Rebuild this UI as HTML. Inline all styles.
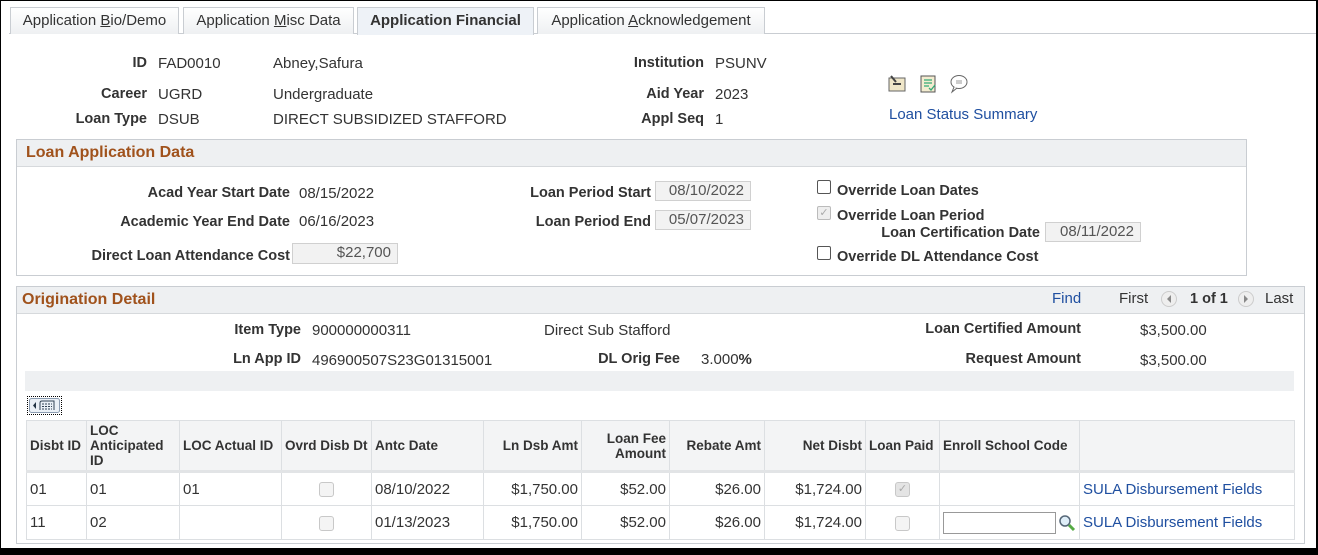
<!DOCTYPE html>
<html><head><meta charset="utf-8"><style>
*{margin:0;padding:0;box-sizing:border-box}
body{width:1318px;height:555px;background:#000;font-family:"Liberation Sans",Arial,sans-serif;font-size:15px;color:#333;position:relative;overflow:hidden}
#pg{position:absolute;left:1px;top:1px;width:1315px;height:547px;background:#fff}
.a{position:absolute;white-space:nowrap;line-height:16px}
.b{font-weight:bold;font-size:14.5px}
.r{text-align:right}
.tab{position:absolute;top:6px;height:27px;border:1px solid #c9cdd2;border-bottom:none;background:linear-gradient(#fff,#eef0f2);font-size:15px;color:#333;text-align:center;line-height:26px}
.hd{position:absolute;background:#eef0f2;border-bottom:1px solid #d6d9dc;color:#a0521c;font-weight:bold;font-size:16px;line-height:26px;padding-left:9px}
.box{position:absolute;border:1px solid #c9cdd2}
.inp{position:absolute;background:#f2f2f2;border:1px solid #d0d0d0;text-align:right;padding-right:6px;color:#555;line-height:18px}
.cb{position:absolute;width:14px;height:14px;border:1px solid #555;border-radius:2px;background:#fff}
.lnk{color:#1f4fa0}
table{position:absolute;left:25px;top:419px;width:1269px;border-collapse:collapse}
td,th{border:1px solid #dcdfe2;font-size:15px;padding:0 3px;white-space:nowrap}
th{background:#f3f4f5;font-weight:bold;font-size:13.5px;color:#333;height:51px;text-align:left;line-height:15px;border-bottom:3px solid #e2e4e6}
td{height:34px}
.rc{text-align:right}
.dcb{display:inline-block;width:15px;height:15px;border:1px solid #c8c8c8;border-radius:3px;background:#f4f4f4;vertical-align:middle}
</style></head><body><div id="pg">
<div style="position:absolute;left:8px;top:32px;width:1307px;height:1px;background:#c9cdd2"></div>
<div class="tab" style="left:9px;width:169px">Application <u>B</u>io/Demo</div>
<div class="tab" style="left:182px;width:171px">Application <u>M</u>isc Data</div>
<div class="tab" style="left:356px;width:177px;background:#eef2f7;font-weight:bold;height:28px">Application Financial</div>
<div class="tab" style="left:536px;width:228px">Application <u>A</u>cknowledgement</div>

<div class="a b r" style="right:1169px;top:54px">ID</div><div class="a" style="left:157px;top:55px">FAD0010</div><div class="a" style="left:272px;top:55px">Abney,Safura</div>
<div class="a b r" style="right:1169px;top:85px">Career</div><div class="a" style="left:157px;top:86px">UGRD</div><div class="a" style="left:272px;top:86px">Undergraduate</div>
<div class="a b r" style="right:1169px;top:110px">Loan Type</div><div class="a" style="left:157px;top:111px">DSUB</div><div class="a" style="left:272px;top:111px">DIRECT SUBSIDIZED STAFFORD</div>
<div class="a b r" style="right:612px;top:54px">Institution</div><div class="a" style="left:714px;top:55px">PSUNV</div>
<div class="a b r" style="right:612px;top:85px">Aid Year</div><div class="a" style="left:714px;top:86px">2023</div>
<div class="a b r" style="right:612px;top:110px">Appl Seq</div><div class="a" style="left:714px;top:111px">1</div>
<svg class="a" style="left:887px;top:73px" width="90" height="20">
<rect x="1" y="4" width="16" height="13" fill="#efe6c8" stroke="#666"/><path d="M3 2 l5 6 M5 10h8" stroke="#444" stroke-width="2"/>
<rect x="33" y="2" width="14" height="16" fill="#f3ecd0" stroke="#555"/><path d="M36 6h8M36 9h8M36 12h5M41 14l2 2 4-5" stroke="#3a7" stroke-width="1.3" fill="none"/>
<ellipse cx="71" cy="8" rx="8" ry="6.5" fill="#fff" stroke="#666"/><path d="M66 13l-2 5 5-4" fill="#fff" stroke="#666"/><path d="M68 7h6M68 9h6" stroke="#999"/>
</svg>
<div class="a lnk" style="left:888px;top:106px">Loan Status Summary</div>

<div class="box" style="left:15px;top:138px;width:1231px;height:137px"></div>
<div class="hd" style="left:16px;top:139px;width:1229px">Loan Application Data</div>
<div class="a b r" style="right:1026px;top:184px">Acad Year Start Date</div><div class="a" style="left:298px;top:185px">08/15/2022</div>
<div class="a b r" style="right:1026px;top:213px">Academic Year End Date</div><div class="a" style="left:298px;top:213px">06/16/2023</div>
<div class="a b r" style="right:1026px;top:247px">Direct Loan Attendance Cost</div><div class="inp" style="left:291px;top:242px;width:106px;height:21px">$22,700</div>
<div class="a b r" style="right:665px;top:184px">Loan Period Start</div><div class="inp" style="left:654px;top:180px;width:96px;height:20px">08/10/2022</div>
<div class="a b r" style="right:665px;top:213px">Loan Period End</div><div class="inp" style="left:654px;top:209px;width:96px;height:20px">05/07/2023</div>
<div class="cb" style="left:816px;top:179px"></div><div class="a b" style="left:836px;top:182px">Override Loan Dates</div>
<div class="cb" style="left:816px;top:205px;border-color:#bbb;background:#eee;color:#aaa;font-size:11px;line-height:12px;text-align:center">✓</div><div class="a b" style="left:836px;top:207px">Override Loan Period</div>
<div class="a b r" style="right:276px;top:224px">Loan Certification Date</div><div class="inp" style="left:1044px;top:221px;width:96px;height:20px">08/11/2022</div>
<div class="cb" style="left:816px;top:245px"></div><div class="a b" style="left:836px;top:248px">Override DL Attendance Cost</div>

<div class="box" style="left:15px;top:285px;width:1289px;height:258px"></div>
<div class="hd" style="left:16px;top:286px;width:1287px;padding-left:5px">Origination Detail</div>
<div class="a lnk" style="left:1051px;top:290px">Find</div>
<div class="a" style="left:1118px;top:290px">First</div>
<svg class="a" style="left:1159px;top:289px" width="100" height="18"><circle cx="9" cy="9" r="7.5" fill="#eee" stroke="#ccc"/><path d="M11 5l-4 4 4 4z" fill="#888"/><circle cx="86" cy="9" r="7.5" fill="#eee" stroke="#ccc"/><path d="M84 5l4 4-4 4z" fill="#888"/></svg>
<div class="a b" style="left:1189px;top:290px">1 of 1</div>
<div class="a" style="left:1264px;top:290px">Last</div>
<div class="a b r" style="right:1015px;top:321px">Item Type</div><div class="a" style="left:311px;top:322px">900000000311</div><div class="a" style="left:543px;top:322px">Direct Sub Stafford</div>
<div class="a b r" style="right:1015px;top:350px">Ln App ID</div><div class="a" style="left:311px;top:352px">496900507S23G01315001</div>
<div class="a b r" style="right:636px;top:350px">DL Orig Fee</div><div class="a" style="left:700px;top:351px">3.000<b>%</b></div>
<div class="a b r" style="right:235px;top:320px">Loan Certified Amount</div><div class="a" style="left:1139px;top:322px">$3,500.00</div>
<div class="a b r" style="right:235px;top:350px">Request Amount</div><div class="a" style="left:1139px;top:352px">$3,500.00</div>
<div style="position:absolute;left:24px;top:370px;width:1269px;height:20px;background:#eef0f2"></div>
<div style="position:absolute;left:26px;top:395px;width:35px;height:19px;border:1px dotted #000;padding:1px"><svg width="31" height="15"><rect x="0.5" y="0.5" width="30" height="14" rx="2" fill="#eaf0f6" stroke="#8a9bb0"/><path d="M7 4l-3 3.5 3 3.5z" fill="#234"/><path d="M11 12V5q0-2 2-2h12v9" fill="none" stroke="#345"/><path d="M13 6h10M13 8.5h10M13 11h10" stroke="#345" stroke-dasharray="2 1"/></svg></div>
<table>
<tr><th style="width:60px">Disbt ID</th><th style="width:93px">LOC<br>Anticipated<br>ID</th><th style="width:102px">LOC Actual ID</th><th style="width:90px">Ovrd Disb Dt</th><th style="width:112px">Antc Date</th><th class="rc" style="width:98px">Ln Dsb Amt</th><th class="rc" style="width:88px;text-align:right">Loan Fee<br>Amount</th><th style="width:95px;text-align:right">Rebate Amt</th><th style="width:101px;text-align:right">Net Disbt</th><th style="width:74px">Loan Paid</th><th style="width:140px">Enroll School Code</th><th></th></tr>
<tr><td>01</td><td>01</td><td>01</td><td style="text-align:center"><span class="dcb"></span></td><td>08/10/2022</td><td class="rc">$1,750.00</td><td class="rc">$52.00</td><td class="rc">$26.00</td><td class="rc">$1,724.00</td><td style="text-align:center"><span class="dcb" style="background:#e4e4e4;color:#aaa;font-size:11px;line-height:13px">✓</span></td><td></td><td class="lnk">SULA Disbursement Fields</td></tr>
<tr><td>11</td><td>02</td><td></td><td style="text-align:center"><span class="dcb"></span></td><td>01/13/2023</td><td class="rc">$1,750.00</td><td class="rc">$52.00</td><td class="rc">$26.00</td><td class="rc">$1,724.00</td><td style="text-align:center"><span class="dcb"></span></td><td><span style="display:inline-block;width:113px;height:22px;border:1px solid #999;vertical-align:middle"></span><svg width="18" height="18" style="vertical-align:middle;margin-left:2px"><circle cx="7" cy="7" r="5" fill="#dfeef8" stroke="#567" stroke-width="1.5"/><path d="M11 11l5 5" stroke="#5a4" stroke-width="3"/></svg></td><td class="lnk">SULA Disbursement Fields</td></tr>
</table>
</div></body></html>
